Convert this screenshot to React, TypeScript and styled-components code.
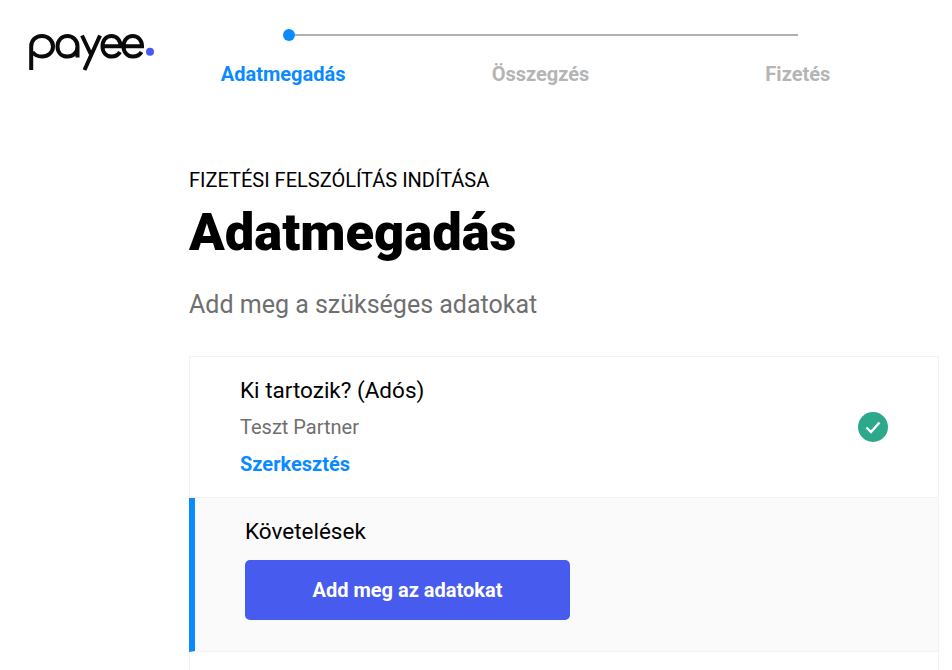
import React from "react";
import styled, { createGlobalStyle } from "styled-components";

const colors = {
  blue: "#0a8aff",
  indigo: "#475bef",
  grey: "#6f6f6f",
  stepGrey: "#b5b5b5",
  border: "#f2f2f2",
};

const Logo = () => (
  <LogoSvg viewBox="0 0 130 40" width="130" height="40">
    <g fill="none" stroke="#0a0a0a" strokeWidth="4">
      {/* p */}
      <path d="M3.200 37V13.500C3.200 7 8 3 14 3C20 3 25 7.500 25 13.500C25 19.500 20 23.500 14 23.500C10 23.500 6.500 22 4.500 19" />
      {/* a */}
      <path d="M49.500 13.500C49.500 19.500 45 23.500 39.500 23.500C33.500 23.500 29.500 19.500 29.500 13.500C29.500 7.500 33.500 3 39.500 3C45 3 49.500 7.500 49.500 13.500V24.500" />
      {/* y */}
      <path d="M54 2.500L63 21.500M72 2.500L56.500 37" />
      {/* e */}
      <path d="M75 13.200H92.500C92.500 7.500 89 3 83.500 3C78 3 74.500 7.500 74.500 13.200C74.500 19.200 78 23.500 83.500 23.500C87.500 23.500 90.300 22 92 19" />
      <path d="M96 13.200H114C114 7.500 110.300 3 104.800 3C99.300 3 95.500 7.500 95.500 13.200C95.500 19.200 99.300 23.500 104.800 23.500C108.800 23.500 111.800 22 113.500 19" />
    </g>
    <circle cx="122" cy="18.800" r="4" fill={colors.indigo} />
  </LogoSvg>
);

const App: React.FC = () => {
  return (
    <>
      <GlobalStyle />
      <Page>
        <Header>
          <Logo />
          <Stepper>
            <Track>
              <Dot />
              <Line />
            </Track>
            <StepLabels>
              <StepLabel $active>Adatmegadás</StepLabel>
              <StepLabel>Összegzés</StepLabel>
              <StepLabel>Fizetés</StepLabel>
            </StepLabels>
          </Stepper>
        </Header>
        <Main>
          <Overline>FIZETÉSI FELSZÓLÍTÁS INDÍTÁSA</Overline>
          <Title>Adatmegadás</Title>
          <Subtitle>Add meg a szükséges adatokat</Subtitle>
          <Card>
            <DoneRow>
              <div>
                <RowTitle>Ki tartozik? (Adós)</RowTitle>
                <RowValue>Teszt Partner</RowValue>
                <EditLink>Szerkesztés</EditLink>
              </div>
              <CheckBadge>
                <svg viewBox="0 0 30 30" width="30" height="30">
                  <path d="M8.500 15.500L13 20L21.500 10.500" fill="none" stroke="#fff" strokeWidth="2.400" />
                </svg>
              </CheckBadge>
            </DoneRow>
            <ActiveRow>
              <RowTitle>Követelések</RowTitle>
              <PrimaryButton>Add meg az adatokat</PrimaryButton>
            </ActiveRow>
            <EmptyRow />
          </Card>
        </Main>
      </Page>
    </>
  );
};

export default App;

const GlobalStyle = createGlobalStyle`
  html, body {
    margin: 0;
    height: 100%;
    overflow: hidden;
    background: #fff;
  }
  * { box-sizing: border-box; }
  body { font-family: Roboto, "Liberation Sans", sans-serif; }
`;

const Page = styled.div`
  width: 952px;
  height: 670px;
  overflow: hidden;
`;

const Header = styled.header`
  display: flex;
  height: 112px;
  padding: 0 0 0 28px;
`;

const LogoSvg = styled.svg`
  flex: none;
  margin-top: 33px;
  margin-right: -3.5px;
`;

const Stepper = styled.div`
  width: 772px;
  padding-top: 29px;
`;

const Track = styled.div`
  display: flex;
  align-items: center;
  height: 12px;
  margin: 0 129px 0 128.500px;
`;

const Dot = styled.span`
  flex: none;
  width: 12px;
  height: 12px;
  border-radius: 50%;
  background: ${colors.blue};
`;

const Line = styled.span`
  flex: 1;
  height: 2px;
  background: #b0b0b0;
`;

const StepLabels = styled.div`
  display: grid;
  grid-template-columns: repeat(3, 1fr);
  margin-top: 21px;
`;

const StepLabel = styled.div<{ $active?: boolean }>`
  text-align: center;
  font-size: 20px;
  line-height: 24px;
  font-weight: 700;
  color: ${(p) => (p.$active ? colors.blue : colors.stepGrey)};
`;

const Main = styled.main`
  padding: 56px 13px 0 189px;
`;

const Overline = styled.div`
  font-size: 20px;
  line-height: 24px;
  color: #000;
`;

const Title = styled.h1`
  margin: 12px 0 0;
  font-size: 52.500px;
  line-height: 56px;
  font-weight: 900;
  color: #000;
`;

const Subtitle = styled.p`
  margin: 29px 0 0;
  font-size: 25px;
  line-height: 32px;
  color: ${colors.grey};
`;

const Card = styled.section`
  margin-top: 35px;
  border: 1px solid ${colors.border};
  border-bottom: none;
`;

const DoneRow = styled.div`
  display: flex;
  justify-content: space-between;
  align-items: center;
  height: 141px;
  padding: 0 50px 0 50px;
  border-bottom: 1px solid ${colors.border};
`;

const RowTitle = styled.div`
  font-size: 22.500px;
  line-height: 28px;
  color: #000;
`;

const RowValue = styled.div`
  margin-top: 9px;
  font-size: 20px;
  line-height: 28px;
  color: ${colors.grey};
`;

const EditLink = styled.a`
  display: block;
  margin-top: 9px;
  font-size: 20px;
  line-height: 28px;
  font-weight: 700;
  color: ${colors.blue};
`;

const CheckBadge = styled.span`
  display: flex;
  width: 30px;
  height: 30px;
  border-radius: 50%;
  background: #2ba98a;
`;

const ActiveRow = styled.div`
  height: 154px;
  margin-left: -1px;
  padding: 19px 0 0 50px;
  border-left: 6px solid ${colors.blue};
  border-bottom: 1px solid ${colors.border};
  background: #fafafa;
`;

const PrimaryButton = styled.button`
  display: block;
  width: 325px;
  height: 60px;
  margin-top: 15px;
  border: none;
  border-radius: 5px;
  background: ${colors.indigo};
  color: #fff;
  font-family: inherit;
  font-size: 20px;
  font-weight: 700;
`;

const EmptyRow = styled.div`
  height: 40px;
`;
